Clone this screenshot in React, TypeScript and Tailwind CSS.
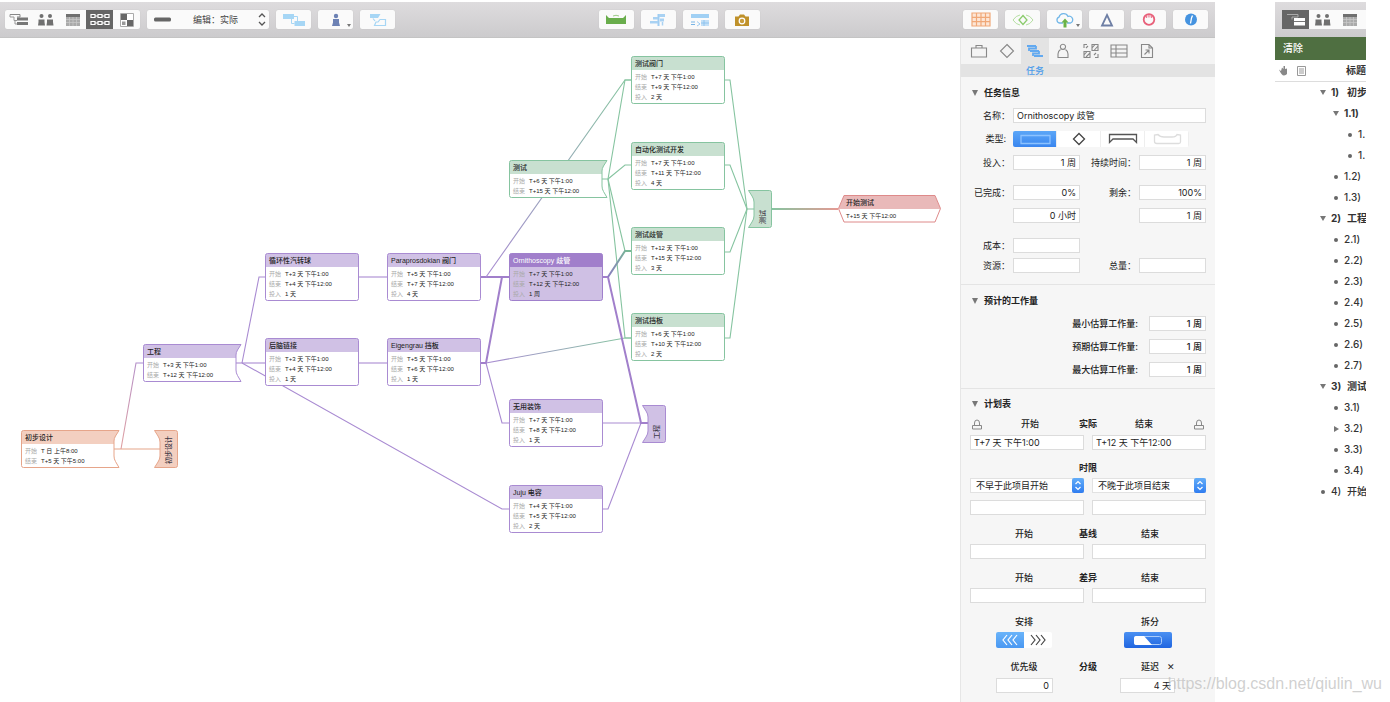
import type { ReactNode } from 'react';
import clsx from 'clsx';

const SANS = "font-['Inter','Noto_Sans_CJK_SC',sans-serif]";
const DIAGRAM = "font-['Liberation_Sans','Noto_Sans_CJK_SC',sans-serif]";

/* ── Diagram data ─────────────────────────────────────────── */

type Tone = 'orange' | 'purple' | 'green' | 'red' | 'selected';
type Shape = 'task' | 'open' | 'close' | 'milestone';

const tones: Record<Tone, { stroke: string; head: string; body: string }> = {
  orange: { stroke: '#e6a58a', head: '#f3cfc0', body: '#ffffff' },
  purple: { stroke: '#a98bd2', head: '#d0c1e5', body: '#ffffff' },
  green: { stroke: '#86c4a0', head: '#c8e0d0', body: '#ffffff' },
  red: { stroke: '#de8a8a', head: '#e9b9b9', body: '#ffffff' },
  selected: { stroke: '#a080cc', head: '#a17fcb', body: '#cfc0e4' },
};

type TaskNode = {
  title: string;
  x: number;
  y: number;
  tone: Tone;
  shape: Shape;
  start?: string;
  end?: string;
  effort?: string;
};

const nodes: TaskNode[] = [
  { title: '初步设计', x: 21, y: 392, tone: 'orange', shape: 'open', start: 'T 日 上午8:00', end: 'T+5 天 下午5:00' },
  { title: '初步设计', x: 154, y: 392, tone: 'orange', shape: 'close' },
  { title: '工程', x: 143, y: 306, tone: 'purple', shape: 'open', start: 'T+3 天 下午1:00', end: 'T+12 天 下午12:00' },
  { title: '循环性汽转球', x: 265, y: 215, tone: 'purple', shape: 'task', start: 'T+3 天 下午1:00', end: 'T+4 天 下午12:00', effort: '1 天' },
  { title: '后脑链接', x: 265, y: 300, tone: 'purple', shape: 'task', start: 'T+3 天 下午1:00', end: 'T+4 天 下午12:00', effort: '1 天' },
  { title: 'Paraprosdokian 阀门', x: 387, y: 215, tone: 'purple', shape: 'task', start: 'T+5 天 下午1:00', end: 'T+7 天 下午12:00', effort: '4 天' },
  { title: 'Eigengrau 挡板', x: 387, y: 300, tone: 'purple', shape: 'task', start: 'T+5 天 下午1:00', end: 'T+6 天 下午12:00', effort: '1 天' },
  { title: 'Ornithoscopy 歧管', x: 509, y: 215, tone: 'selected', shape: 'task', start: 'T+7 天 下午1:00', end: 'T+12 天 下午12:00', effort: '1 周' },
  { title: '测试', x: 509, y: 122, tone: 'green', shape: 'open', start: 'T+6 天 下午1:00', end: 'T+15 天 下午12:00' },
  { title: '测试阀门', x: 631, y: 18, tone: 'green', shape: 'task', start: 'T+7 天 下午1:00', end: 'T+9 天 下午12:00', effort: '2 天' },
  { title: '自动化测试开发', x: 631, y: 104, tone: 'green', shape: 'task', start: 'T+7 天 下午1:00', end: 'T+11 天 下午12:00', effort: '4 天' },
  { title: '测试歧管', x: 631, y: 189, tone: 'green', shape: 'task', start: 'T+12 天 下午1:00', end: 'T+15 天 下午12:00', effort: '3 天' },
  { title: '测试挡板', x: 631, y: 275, tone: 'green', shape: 'task', start: 'T+6 天 下午1:00', end: 'T+10 天 下午12:00', effort: '2 天' },
  { title: '无用装饰', x: 509, y: 361, tone: 'purple', shape: 'task', start: 'T+7 天 下午1:00', end: 'T+8 天 下午12:00', effort: '1 天' },
  { title: 'Juju 电容', x: 509, y: 447, tone: 'purple', shape: 'task', start: 'T+4 天 下午1:00', end: 'T+5 天 下午12:00', effort: '2 天' },
  { title: '工程', x: 642, y: 367, tone: 'purple', shape: 'close' },
  { title: '测试', x: 748, y: 152, tone: 'green', shape: 'close' },
  { title: '开始测试', x: 838, y: 157, tone: 'red', shape: 'milestone', start: 'T+15 天 下午12:00' },
];

// outline and header path of every node shape
const shapes: Record<Shape, { w: number; h: number; box: string; head: string }> = {
  task: { w: 94, h: 48, box: 'M2.5 .5H91.5Q93.5 .5 93.5 2.5V45.5Q93.5 47.5 91.5 47.5H2.5Q.5 47.5 .5 45.5V2.5Q.5 .5 2.5 .5Z', head: 'M2.5 .5H91.5Q93.5 .5 93.5 2.5V14H.5V2.5Q.5 .5 2.5 .5Z' },
  open: { w: 99, h: 38, box: 'M2.5 .5H98L94.5 6Q93 8.500 93 11V26Q93 29 94.500 31.500L98 37.500H2.500Q.5 37.500 .5 35.500V2.500Q.5 .5 2.500 .5Z', head: 'M2.5 .5H98L94.5 6Q93 8.5 93 11V14H.5V2.5Q.5 .5 2.5 .5Z' },
  close: { w: 24, h: 38, box: 'M.5 .5H21.5Q23.5 .5 23.5 2.5V35.5Q23.5 37.5 21.5 37.5H.5L4 32Q6 29 6 26V12Q6 9 4 6Z', head: 'M.5 .5H21.5Q23.5 .5 23.5 2.5V35.5Q23.5 37.5 21.5 37.5H.5L4 32Q6 29 6 26V12Q6 9 4 6Z' },
  milestone: { w: 103, h: 28, box: 'M6 .5H97L102.500 13.500L97 27H6L.5 13.500Z', head: 'M6 .5H97L102.500 14H.5Z' },
};

const edges: { d: string; stroke: string; width?: number }[] = [
  { d: 'M113 411H160', stroke: '#e6a58a' },
  { d: 'M121 411L136 325H143', stroke: 'url(#orange-purple)' },
  { d: 'M235 325H265', stroke: '#a98bd2' },
  { d: 'M242 325L259 239H265', stroke: '#a98bd2' },
  { d: 'M242 325L502 471H509', stroke: '#a98bd2' },
  { d: 'M358 239H387', stroke: '#a98bd2' },
  { d: 'M358 325H387', stroke: '#a98bd2' },
  { d: 'M480 239H509', stroke: '#a17fcb', width: 2 },
  { d: 'M486 239L625 42H631', stroke: 'url(#purple-green)' },
  { d: 'M480 325H486L502 239', stroke: '#a17fcb', width: 2 },
  { d: 'M486 325L625 300H631', stroke: 'url(#purple-green)' },
  { d: 'M486 325L502 385H509', stroke: '#a98bd2' },
  { d: 'M602 385H648', stroke: '#a98bd2' },
  { d: 'M602 471H608L641 385', stroke: '#a98bd2' },
  { d: 'M602 141H608L625 42H631', stroke: '#86c4a0' },
  { d: 'M608 141L625 127H631', stroke: '#86c4a0' },
  { d: 'M608 141L625 213H631', stroke: '#86c4a0' },
  { d: 'M608 141L625 300H631', stroke: '#86c4a0' },
  { d: 'M602 239H608L641 385H648', stroke: '#a17fcb', width: 2 },
  { d: 'M608 239L625 213H631', stroke: 'url(#purple-green-short)', width: 2 },
  { d: 'M724 42H730L747 171H754', stroke: '#86c4a0' },
  { d: 'M724 127H730L747 171', stroke: '#86c4a0' },
  { d: 'M724 214H730L747 171', stroke: '#86c4a0' },
  { d: 'M724 300H730L747 171', stroke: '#86c4a0' },
];

function Gradient({ id, x1, x2, from, to }: { id: string; x1: number; x2: number; from: string; to: string }) {
  return (
    <linearGradient id={id} gradientUnits="userSpaceOnUse" x1={x1} x2={x2} y1={0} y2={0}>
      <stop offset="0" stopColor={from} />
      <stop offset="1" stopColor={to} />
    </linearGradient>
  );
}

function NodeCard({ node }: { node: TaskNode }) {
  const shape = shapes[node.shape];
  const tone = tones[node.tone];
  const rows = [
    ['开始', node.start],
    ['结束', node.end],
    ['投入', node.effort],
  ].filter((row) => row[1]);

  return (
    <article className="absolute" style={{ left: node.x, top: node.y, width: shape.w, height: shape.h }}>
      <svg className="absolute inset-0" width={shape.w} height={shape.h} aria-hidden="true">
        <path d={shape.box} fill={tone.body} />
        <path d={shape.head} fill={tone.head} />
        <path d={shape.box} fill="none" stroke={tone.stroke} />
      </svg>
      {node.shape === 'close' ? (
        <h3 className="relative flex h-full w-full items-center rotate-180 pt-1 pr-1 text-[7px] leading-[9px] font-medium text-[#3f3a48] [writing-mode:vertical-rl] [text-orientation:sideways]">
          {node.title}
        </h3>
      ) : (
        <div className={clsx('relative', node.shape === 'milestone' ? 'pl-2' : 'pl-1')}>
          <h3 className={clsx('h-4 text-[7px] leading-4 font-medium whitespace-nowrap', node.tone === 'selected' ? 'text-white' : 'text-[#222]')}>
            {node.title}
          </h3>
          {node.shape === 'milestone' ? (
            <p className="text-[6px] leading-[10px] text-[#222]">{node.start}</p>
          ) : (
            <dl>
              {rows.map(([label, value]) => (
                <div key={label} className="flex gap-1 text-[6px] leading-[10px] whitespace-nowrap">
                  <dt className="text-[#aaa]">{label}</dt>
                  <dd className="text-[#222]">{value}</dd>
                </div>
              ))}
            </dl>
          )}
        </div>
      )}
    </article>
  );
}

function Network() {
  return (
    <main className={clsx('relative min-w-0 flex-1 overflow-hidden bg-white', DIAGRAM)}>
      <svg className="absolute inset-0 h-full w-full" fill="none" aria-hidden="true">
        <defs>
          <Gradient id="orange-purple" x1={121} x2={140} from="#e0a0a0" to="#a98bd2" />
          <Gradient id="purple-green" x1={486} x2={625} from="#a98bd2" to="#86c4a0" />
          <Gradient id="purple-green-short" x1={608} x2={627} from="#8a7cc0" to="#78b896" />
          <Gradient id="green-red" x1={772} x2={838} from="#86c4a0" to="#e59a94" />
        </defs>
        {edges.map((edge) => (
          <path key={edge.d} d={edge.d} stroke={edge.stroke} strokeWidth={edge.width ?? 1.1} />
        ))}
        <rect x="772" y="170" width="66" height="2" fill="url(#green-red)" />
      </svg>
      {nodes.map((node) => (
        <NodeCard key={`${node.x}-${node.y}`} node={node} />
      ))}
    </main>
  );
}

/* ── Toolbar ──────────────────────────────────────────────── */

const icons = {
  gantt: (
    <svg width="20" height="14" viewBox="0 0 20 14">
      <path d="M1 1.5H11V4H8" fill="none" stroke="#888" />
      <path d="M8 4.500H19V7.500H8ZM8 9H19V12H8Z" fill="#777" />
      <path d="M1 1.500V4H5V7.500H8M6 8V11H8" fill="none" stroke="#999" />
    </svg>
  ),
  people: (
    <svg width="18" height="14" viewBox="0 0 18 14" fill="#707070">
      <circle cx="4.500" cy="3" r="2" />
      <circle cx="13" cy="3" r="2" />
      <path d="M1.500 6.500H7.500V9L8 12.500H1L1.500 9ZM10 6.500H16V9L16.500 12.500H9.500L10 9Z" />
    </svg>
  ),
  calendar: (
    <svg width="16" height="14" viewBox="0 0 16 14">
      <path d="M1 1H15V13H1Z" fill="#aaa" />
      <path d="M1 1H15V4H1Z" fill="#707070" />
      <path d="M1 6.500H15M1 9.500H15M4.500 4V13M8 4V13M11.500 4V13" stroke="#ccc" strokeWidth=".7" />
    </svg>
  ),
  network: (
    <svg width="22" height="15" viewBox="0 0 22 15" fill="none" stroke="#fff" strokeWidth="1.200">
      <path d="M2 2.500H6V5.500H2ZM9 2.500H13V5.500H9ZM16 2.500H20V5.500H16ZM2 9.500H6V12.500H2ZM9 9.500H13V12.500H9ZM16 9.500H20V12.500H16Z" />
      <path d="M6 4H9M13 4H16M6 11H9M13 11H16" />
    </svg>
  ),
  style: (
    <svg width="16" height="14" viewBox="0 0 16 14">
      <path d="M1.500 .5H14.500V13.500H1.500Z" fill="#fff" stroke="#aaa" />
      <path d="M2 1H8V7H2ZM8 7H14V13H8Z" fill="#666" />
      <path d="M3 8.500H6.500V12H3Z" fill="#999" />
    </svg>
  ),
  outline: (
    <svg width="20" height="14" viewBox="0 0 20 14">
      <path d="M1 1.500H12V4H6V6.500" fill="none" stroke="#aaa" />
      <path d="M8 5H19V12.500H8Z" fill="#fff" />
      <path d="M8 8.500H19" stroke="#777" />
    </svg>
  ),
  link: (
    <svg width="24" height="14" viewBox="0 0 24 14">
      <path d="M1 1H12V6H1ZM12.500 8H23V13H12.500Z" fill="#a6d6f5" />
      <path d="M12 3.500H15.500V8M9.500 6V10.500H12.500" fill="none" stroke="#a6d6f5" />
    </svg>
  ),
  person: (
    <svg width="12" height="14" viewBox="0 0 12 14" fill="#6d82b5">
      <circle cx="6" cy="3" r="2.200" />
      <path d="M3 6H9V9.500L10 13H2L3 9.500Z" />
    </svg>
  ),
  split: (
    <svg width="20" height="14" viewBox="0 0 20 14">
      <path d="M2 1H12.500L10 5H2Z" fill="#a6d6f5" />
      <path d="M12 6.500H17.500V12.500H6.500L8 9H10ZM5 5.500L7 8" fill="none" stroke="#a6d6f5" strokeWidth="1.200" />
    </svg>
  ),
  level: (
    <svg width="22" height="12" viewBox="0 0 22 12">
      <path d="M1 1L4 4H18L21 1V10H1Z" fill="#69ad4c" />
      <path d="M8 2Q11 .5 14 2" fill="none" stroke="#9ccc85" />
    </svg>
  ),
  balance: (
    <svg width="18" height="14" viewBox="0 0 18 14">
      <path d="M9.500 1V13" stroke="#9fcdf2" strokeWidth="2" />
      <path d="M4 4H9V6.500H4ZM1 8H9V10.500H1ZM10 1H16V4H10ZM11 5.500H15V8.500H11Z" fill="#a9d2f3" />
      <path d="M13.500 9V12.500" stroke="#a9d2f3" strokeWidth="1.500" />
    </svg>
  ),
  catchUp: (
    <svg width="20" height="14" viewBox="0 0 20 14">
      <path d="M1 1H19V5H1Z" fill="#a0d0f4" />
      <path d="M11 7H19V13H11Z" fill="#c3e0f7" />
      <path d="M1 9H5M1 11.500H5" stroke="#79b5e6" />
      <path d="M7 8.500L10 11L7 13M11 10H19M14 7V13" fill="none" stroke="#86bfee" strokeWidth=".8" />
    </svg>
  ),
  camera: (
    <svg width="16" height="14" viewBox="0 0 16 14">
      <path d="M1 3.500H4.500L6 1.500H10L11.500 3.500H15V13H1Z" fill="#bf912a" />
      <circle cx="8" cy="8" r="2.800" fill="#c99c3a" stroke="#fff" strokeWidth="1.200" />
    </svg>
  ),
  table: (
    <svg width="20" height="15" viewBox="0 0 20 15" fill="#fde6d6" stroke="#f0a878" strokeWidth="1.200">
      <path d="M1 1H19V14H1ZM1 5.300H19M1 9.700H19M5.500 1V14M10 1V14M14.500 1V14" />
    </svg>
  ),
  eye: (
    <svg width="22" height="14" viewBox="0 0 22 14" fill="none" stroke="#b5dfa2">
      <path d="M8 2Q4 2.500 1 7Q4 11.500 8 12M14 2Q18 2.500 21 7Q18 11.500 14 12" />
      <path d="M11 2.500L15 7L11 11.500L7 7Z" stroke="#8acb6c" strokeWidth="1.300" />
    </svg>
  ),
  cloud: (
    <svg width="20" height="16" viewBox="0 0 20 16">
      <path d="M8 11H4.500A3 3 0 0 1 4 5.200A4.800 4.800 0 0 1 13 4.500A3.400 3.400 0 0 1 15.500 11H12" fill="none" stroke="#72b7e8" strokeWidth="1.300" />
      <path d="M10 6.500L13.500 10.500H11.500V15.500H8.500V10.500H6.500Z" fill="#69b347" />
    </svg>
  ),
  baseline: (
    <svg width="14" height="14" viewBox="0 0 14 14">
      <path d="M7 2L12 12.500H2Z" fill="none" stroke="#6e7fa5" strokeWidth="1.800" />
    </svg>
  ),
  violation: (
    <svg width="14" height="15" viewBox="0 0 14 15" fill="none" stroke="#e8607a">
      <circle cx="7" cy="7.500" r="5.300" strokeWidth="1.800" />
      <path d="M4.500 6V4M6.200 5.500V3M7.900 5.500V3M9.500 6V4" strokeWidth=".8" />
    </svg>
  ),
  info: (
    <svg width="14" height="15" viewBox="0 0 14 15">
      <circle cx="7" cy="7.500" r="6" fill="#4593e0" />
      <path d="M8.500 3.500L7.500 6L6.500 11.500" fill="none" stroke="#fff" strokeWidth="1.300" />
    </svg>
  ),
};

function ToolButton({ label, menu, children }: { label: string; menu?: boolean; children: ReactNode }) {
  return (
    <button type="button" aria-label={label} className="relative flex h-[19px] w-[35px] items-center justify-center rounded-xs bg-[#fafafa] shadow-[0_0_1px_#bbb]">
      {children}
      {menu && <span className="absolute right-0.5 bottom-0.5 border-x-2 border-t-3 border-x-transparent border-t-[#777]" />}
    </button>
  );
}

function ViewButton({ label, active, children }: { label: string; active?: boolean; children: ReactNode }) {
  return (
    <button type="button" aria-label={label} aria-pressed={!!active} className={clsx('flex h-full w-[27px] shrink-0 items-center justify-center', active && 'bg-[#666]')}>
      {children}
    </button>
  );
}

function Toolbar() {
  return (
    <header className="flex h-9 items-center justify-between border-b border-[#c4c4c4] bg-linear-to-b from-[#dedcde] to-[#cccbcd] pr-[7px] pl-[5px]">
      <div className="flex items-center gap-[7px]">
        <div className="flex h-[19px] rounded-xs bg-[#fafafa] shadow-[0_0_1px_#bbb]">
          <ViewButton label="任务视图">{icons.gantt}</ViewButton>
          <ViewButton label="资源视图">{icons.people}</ViewButton>
          <ViewButton label="日历视图">{icons.calendar}</ViewButton>
          <ViewButton label="网络视图" active>{icons.network}</ViewButton>
          <ViewButton label="样式视图">{icons.style}</ViewButton>
        </div>
        <div className="relative h-[19px] w-[122px] rounded-xs bg-[#fafafa] shadow-[0_0_1px_#bbb]">
          <select aria-label="编辑" className="block h-[19px] w-full appearance-none pl-[46px] text-[9px] leading-[9px] text-[#444]">
            <option>编辑：实际</option>
          </select>
          <svg className="pointer-events-none absolute inset-0" width="122" height="19" fill="none" aria-hidden="true">
            <rect x="7" y="7.500" width="17" height="4" rx="1.500" fill="#666" />
            <path d="M112 7L115 4L118 7M112 12L115 15L118 12" stroke="#555" strokeWidth="1.300" />
          </svg>
        </div>
        <ToolButton label="连接">{icons.link}</ToolButton>
        <ToolButton label="分配" menu>{icons.person}</ToolButton>
        <ToolButton label="拆分任务">{icons.split}</ToolButton>
      </div>
      <div className="flex gap-[7px]">
        <ToolButton label="调配">{icons.level}</ToolButton>
        <ToolButton label="平衡">{icons.balance}</ToolButton>
        <ToolButton label="追赶">{icons.catchUp}</ToolButton>
        <ToolButton label="快照">{icons.camera}</ToolButton>
      </div>
      <div className="flex gap-[7px]">
        <ToolButton label="表格">{icons.table}</ToolButton>
        <ToolButton label="查看">{icons.eye}</ToolButton>
        <ToolButton label="发布" menu>{icons.cloud}</ToolButton>
        <ToolButton label="更改">{icons.baseline}</ToolButton>
        <ToolButton label="冲突">{icons.violation}</ToolButton>
        <ToolButton label="检查器">{icons.info}</ToolButton>
      </div>
    </header>
  );
}

/* ── Inspector ────────────────────────────────────────────── */

const tabs = [
  { label: '项目', d: 'M1.500 5H16.500V14H1.500ZM6 5V2.500H12V5' },
  { label: '里程碑', d: 'M9 1.500L15.500 8L9 14.500L2.500 8Z' },
  { label: '任务', d: 'M1 3H10M4 8H13M8 13H17M10 3V5.500H3V8M13 8V10.500H7V13' },
  { label: '资源', d: 'M9 1.200A2.600 2.600 0 1 1 8.900 1.200ZM6.500 6.500Q4 8 4 11V14.500H14V11Q14 8 11.500 6.500' },
  { label: '样式', d: 'M2 8.500H8V14.500H2ZM10 1.500H16V7.500H10ZM2 12L5 8.500M4 14L8 10M10 5L13 1.500M12 7.500L16 3M2 5V1.500H5M13 14.500H16V11M4 5L6 3M12 12L14 10' },
  { label: '数据', d: 'M1 2H17V14H1ZM1 6H17M1 10H17M6 2V14' },
  { label: '附件', d: 'M3.500 1.500H11L14.500 5V14.500H3.500ZM11 1.500V5H14.500M6.500 11.500L11 7M7.500 7H11V10.500' },
];

function Field({ label, value = '', className, align = 'right' }: { label: string; value?: string; className?: string; align?: 'left' | 'right' }) {
  return (
    <input
      aria-label={label}
      defaultValue={value}
      className={clsx('h-[15px] min-w-0 border border-[#dcdcdc] bg-white px-[3px] text-[9px] text-[#222]', align === 'right' && 'text-right', className)}
    />
  );
}

function PairRow({ left, right, className }: { left: [string, string, string?]; right?: [string, string, string?]; className?: string }) {
  return (
    <div className={clsx('grid h-[15px] grid-cols-[40px_67px_1fr_67px] items-center gap-x-[3px]', className)}>
      <span className="text-right whitespace-nowrap">{left[0]}</span>
      <Field label={left[2] ?? left[0]} value={left[1]} />
      {right && (
        <>
          <span className="text-right whitespace-nowrap">{right[0]}</span>
          <Field label={right[2] ?? right[0]} value={right[1]} />
        </>
      )}
    </div>
  );
}

function SectionTitle({ children }: { children: ReactNode }) {
  return (
    <h2 className="flex h-4 items-center gap-1.5 pl-0.5 font-bold">
      <span className="border-x-3 border-t-6 border-x-transparent border-t-[#777]" />
      {children}
    </h2>
  );
}

function Triple({ left, mid, right, className }: { left?: ReactNode; mid?: string; right?: ReactNode; className?: string }) {
  return (
    <div className={clsx('grid h-3 grid-cols-[1fr_20px_1fr] items-center text-center font-medium whitespace-nowrap', className)}>
      <span>{left}</span>
      <span className="font-bold">{mid}</span>
      <span className="pr-1">{right}</span>
    </div>
  );
}

function TwoFields({ name, values = ['', ''], className }: { name: string; values?: [string, string]; className?: string }) {
  return (
    <div className={clsx('grid grid-cols-2 gap-2', className)}>
      <Field label={`${name} 开始`} value={values[0]} align="left" />
      <Field label={`${name} 结束`} value={values[1]} align="left" />
    </div>
  );
}

function Limit({ label, value }: { label: string; value: string }) {
  return (
    <div className="relative h-[15px]">
      <select aria-label={label} className="block h-[15px] w-full appearance-none border border-[#e2e2e2] bg-white pl-[5px] text-[9px] leading-[9px] text-[#222]">
        <option>{value}</option>
      </select>
      <span className="pointer-events-none absolute inset-y-0 right-0 flex w-3 items-center justify-center rounded-xs bg-linear-to-b from-[#63adf8] to-[#2f7cf0]">
        <svg width="8" height="11" fill="none" stroke="#fff" strokeWidth="1.200">
          <path d="M1.500 4L4 1.500L6.500 4M1.500 7L4 9.500L6.500 7" />
        </svg>
      </span>
    </div>
  );
}

function Lock() {
  return (
    <svg width="10" height="11" fill="none" stroke="#888" aria-hidden="true">
      <path d="M.5 6.500H9.500V10H.5ZM2.500 6.500V4Q2.500 1 5 1Q7.500 1 7.500 4V6.500" />
    </svg>
  );
}

const kinds = [
  { label: '任务', d: 'M8 4.500H37V12.500H8Z', color: '#8cc2ff' },
  { label: '里程碑', d: 'M22 2.500L27.500 8L22 13.500L16.500 8Z', color: '#444' },
  { label: '组', d: 'M8.500 3.500H35.500V11.500L32 8H12L8.500 11.500Z', color: '#555' },
  { label: '吊床', d: 'M13 3.500Q15 6 19 6H27Q31 6 32 3.500L35.500 4V11Q35.500 12.500 33.500 12.500H12Q9.500 12.500 9.500 10.500V4Z', color: '#ddd' },
];

function Inspector() {
  return (
    <aside className="w-[255px] shrink-0 border-l border-[#e6e6e6] bg-[#f6f6f6] text-[9px] leading-3 text-[#222]">
      <nav className="bg-[#e3e3e3]">
        <div className="flex h-[26px] bg-[#f4f4f4] pl-1">
          {tabs.map((tab) => (
            <button key={tab.label} type="button" aria-label={tab.label} className={clsx('flex w-7 items-center justify-center', tab.label === '任务' && 'bg-[#e3e3e3]')}>
              <svg width="18" height="16" fill="none" stroke={tab.label === '任务' ? '#62a9f0' : '#888'} strokeWidth={tab.label === '任务' ? 1.8 : 1.1}>
                <path d={tab.d} />
              </svg>
            </button>
          ))}
        </div>
        <p className="h-[13px] pl-[65px] font-medium leading-[13px] text-[#4b9bea]">任务</p>
      </nav>

      <section className="border-b border-[#e4e4e4] px-[9px] pt-2 pb-[11px]">
        <SectionTitle>任务信息</SectionTitle>
        <div className="mt-[7px] flex items-center gap-[3px]">
          <label htmlFor="task-name" className="w-10 text-right">名称：</label>
          <input id="task-name" defaultValue="Ornithoscopy 歧管" className="h-[15px] min-w-0 flex-1 border border-[#dcdcdc] bg-white px-[3px] text-[9px]" />
        </div>
        <div className="mt-2 flex h-4 items-center gap-[3px]">
          <span className="w-10 pr-1 text-right">类型:</span>
          <div className="flex h-4 overflow-hidden rounded-xs bg-white">
            {kinds.map((kind, i) => (
              <button key={kind.label} type="button" aria-label={kind.label} className={clsx('border-r border-[#eee]', i === 0 && 'bg-linear-to-b from-[#5ba6f7] to-[#3a86ef]')}>
                <svg width="43" height="16" fill="none" stroke={kind.color} strokeWidth="1.300">
                  <path d={kind.d} />
                </svg>
              </button>
            ))}
          </div>
        </div>
        <PairRow className="mt-2" left={['投入：', '1 周']} right={['持续时间：', '1 周']} />
        <PairRow className="mt-[15px]" left={['已完成：', '0%']} right={['剩余：', '100%']} />
        <PairRow className="mt-2" left={['', '0 小时', '已完成投入']} right={['', '1 周', '剩余投入']} />
        <PairRow className="mt-[15px]" left={['成本：', '']} />
        <PairRow className="mt-[5px]" left={['资源：', '']} right={['总量：', '']} />
      </section>

      <section className="border-b border-[#e4e4e4] px-[9px] pt-2 pb-[11px]">
        <SectionTitle>预计的工作量</SectionTitle>
        <div className="mt-[7px] flex flex-col gap-2 font-medium">
          {['最小估算工作量', '预期估算工作量', '最大估算工作量'].map((label) => (
            <div key={label} className="flex items-center justify-end gap-[11px]">
              <span>{label}:</span>
              <Field label={label} value="1 周" className="w-[57px]" />
            </div>
          ))}
        </div>
      </section>

      <section className="px-[9px] pt-[7px] pb-2">
        <SectionTitle>计划表</SectionTitle>
        <div className="mt-1.5 flex items-center px-0.5">
          <Lock />
          <Triple className="flex-1" left="开始" mid="实际" right="结束" />
          <Lock />
        </div>
        <TwoFields name="实际" values={['T+7 天 下午1:00', 'T+12 天 下午12:00']} className="mt-[5px]" />
        <Triple className="mt-3" mid="时限" />
        <div className="mt-1 grid grid-cols-2 gap-2">
          <Limit label="开始时限" value="不早于此项目开始" />
          <Limit label="结束时限" value="不晚于此项目结束" />
        </div>
        <TwoFields name="时限" className="mt-[7px]" />
        <Triple className="mt-[13px]" left="开始" mid="基线" right="结束" />
        <TwoFields name="基线" className="mt-1" />
        <Triple className="mt-[13px]" left="开始" mid="差异" right="结束" />
        <TwoFields name="差异" className="mt-1" />
        <Triple className="mt-[13px]" left="安排" right="拆分" />
        <div className="mt-1 flex justify-between pr-[34px] pl-[26px]">
          <div className="flex h-4 overflow-hidden rounded-xs bg-white">
            <button type="button" aria-label="尽早" className="bg-linear-to-b from-[#6ab4fa] to-[#4a98f2]">
              <svg width="28" height="16" fill="none" stroke="#fff" strokeWidth="1.200">
                <path d="M11 3L7 8L11 13M16 3L12 8L16 13M21 3L17 8L21 13" />
              </svg>
            </button>
            <button type="button" aria-label="尽晚">
              <svg width="28" height="16" fill="none" stroke="#444" strokeWidth="1.200">
                <path d="M7 3L11 8L7 13M12 3L16 8L12 13M17 3L21 8L17 13" />
              </svg>
            </button>
          </div>
          <button type="button" aria-label="拆分" className="h-4 rounded-xs bg-linear-to-b from-[#4a90f2] to-[#2065e0]">
            <svg width="48" height="16" fill="none">
              <rect x="10.500" y="4.500" width="27" height="8" rx="2" stroke="#a9cbfa" />
              <path d="M12 4H20L28 13H12Q10 13 10 11V6Q10 4 12 4Z" fill="#fff" />
            </svg>
          </button>
        </div>
        <Triple className="mt-[13px]" left="优先级" mid="分级" right={<>延迟<span className="-mr-4 ml-2">✕</span></>} />
        <div className="mt-[5px] flex justify-between pr-[31px] pl-[26px]">
          <Field label="优先级" value="0" className="w-[57px]" />
          <Field label="延迟" value="4 天" className="w-[55px]" />
        </div>
      </section>
    </aside>
  );
}

/* ── Outline window ───────────────────────────────────────── */

type Row = { no: string; level: number; mark: 'open' | 'closed' | 'dot'; title?: string };

const outline: Row[] = [
  { no: '1)', level: 0, mark: 'open', title: '初步' },
  { no: '1.1)', level: 1, mark: 'open' },
  { no: '1.', level: 2, mark: 'dot' },
  { no: '1.', level: 2, mark: 'dot' },
  { no: '1.2)', level: 1, mark: 'dot' },
  { no: '1.3)', level: 1, mark: 'dot' },
  { no: '2)', level: 0, mark: 'open', title: '工程' },
  { no: '2.1)', level: 1, mark: 'dot' },
  { no: '2.2)', level: 1, mark: 'dot' },
  { no: '2.3)', level: 1, mark: 'dot' },
  { no: '2.4)', level: 1, mark: 'dot' },
  { no: '2.5)', level: 1, mark: 'dot' },
  { no: '2.6)', level: 1, mark: 'dot' },
  { no: '2.7)', level: 1, mark: 'dot' },
  { no: '3)', level: 0, mark: 'open', title: '测试' },
  { no: '3.1)', level: 1, mark: 'dot' },
  { no: '3.2)', level: 1, mark: 'closed' },
  { no: '3.3)', level: 1, mark: 'dot' },
  { no: '3.4)', level: 1, mark: 'dot' },
  { no: '4)', level: 0, mark: 'dot', title: '开始' },
];

const indents = ['pl-11', 'pl-[57px]', 'pl-[71px]'];

function Marker({ mark }: { mark: Row['mark'] }) {
  return (
    <span className="flex w-2 shrink-0 items-center justify-center">
      {mark === 'open' && <span className="border-x-3 border-t-5 border-x-transparent border-t-[#777]" />}
      {mark === 'closed' && <span className="border-y-3 border-l-5 border-y-transparent border-l-[#777]" />}
      {mark === 'dot' && <span className="size-1 rounded-full bg-[#666]" />}
    </span>
  );
}

function OutlineWindow() {
  return (
    <section className="w-[91px] shrink-0 overflow-hidden">
      <header className="flex h-[35px] items-center bg-linear-to-b from-[#dedcde] to-[#cccbcd] pl-[7px]">
        <div className="flex h-[19px] rounded-xs bg-[#fafafa]">
          <ViewButton label="任务" active>{icons.outline}</ViewButton>
          <ViewButton label="资源">{icons.people}</ViewButton>
          <ViewButton label="日历">{icons.calendar}</ViewButton>
          <ViewButton label="网络">{icons.style}</ViewButton>
        </div>
      </header>
      <div className="flex h-[23px] items-center bg-[#4f6f41] pl-2">
        <button type="button" className="text-[10px] font-medium text-white">清除</button>
      </div>
      <div className="flex h-[22px] items-center border-b border-[#ddd] pl-1 text-[10px] font-bold whitespace-nowrap text-[#333]">
        <svg width="9" height="10" fill="#888" aria-hidden="true">
          <path d="M0 3.500L2 5L3 1.500L4.500 3V0H6V3L8.500 2.500L9 6Q8 9.500 5 9.500Q2.500 9.500 0 3.500Z" />
        </svg>
        <svg className="ml-2.5 shrink-0" width="9" height="10" fill="none" stroke="#999" aria-hidden="true">
          <path d="M.5 .5H8.500V9.500H.5ZM2 3H7M2 5H7M2 7H7" />
        </svg>
        <span className="ml-10">标题</span>
      </div>
      <ul>
        {outline.map((row, i) => (
          <li
            key={i}
            className={clsx('flex h-[21px] items-center gap-1 text-[10px] whitespace-nowrap text-[#333]', indents[row.level], row.mark === 'open' ? 'font-bold' : 'font-medium')}
          >
            <Marker mark={row.mark} />
            <span className="w-3 shrink-0">{row.no}</span>
            {row.title && <span>{row.title}</span>}
          </li>
        ))}
      </ul>
    </section>
  );
}

export default function App() {
  return (
    <div className={clsx('relative flex min-h-screen gap-[60px] overflow-hidden bg-white pt-0.5 pr-6', SANS)}>
      <div className="flex min-w-0 flex-1 flex-col">
        <Toolbar />
        <div className="flex flex-1">
          <Network />
          <Inspector />
        </div>
      </div>
      <OutlineWindow />
      <p className="pointer-events-none absolute right-2 bottom-2 font-['Liberation_Sans',sans-serif] text-base leading-5 text-[#bbb]/70">
        https://blog.csdn.net/qiulin_wu
      </p>
    </div>
  );
}
